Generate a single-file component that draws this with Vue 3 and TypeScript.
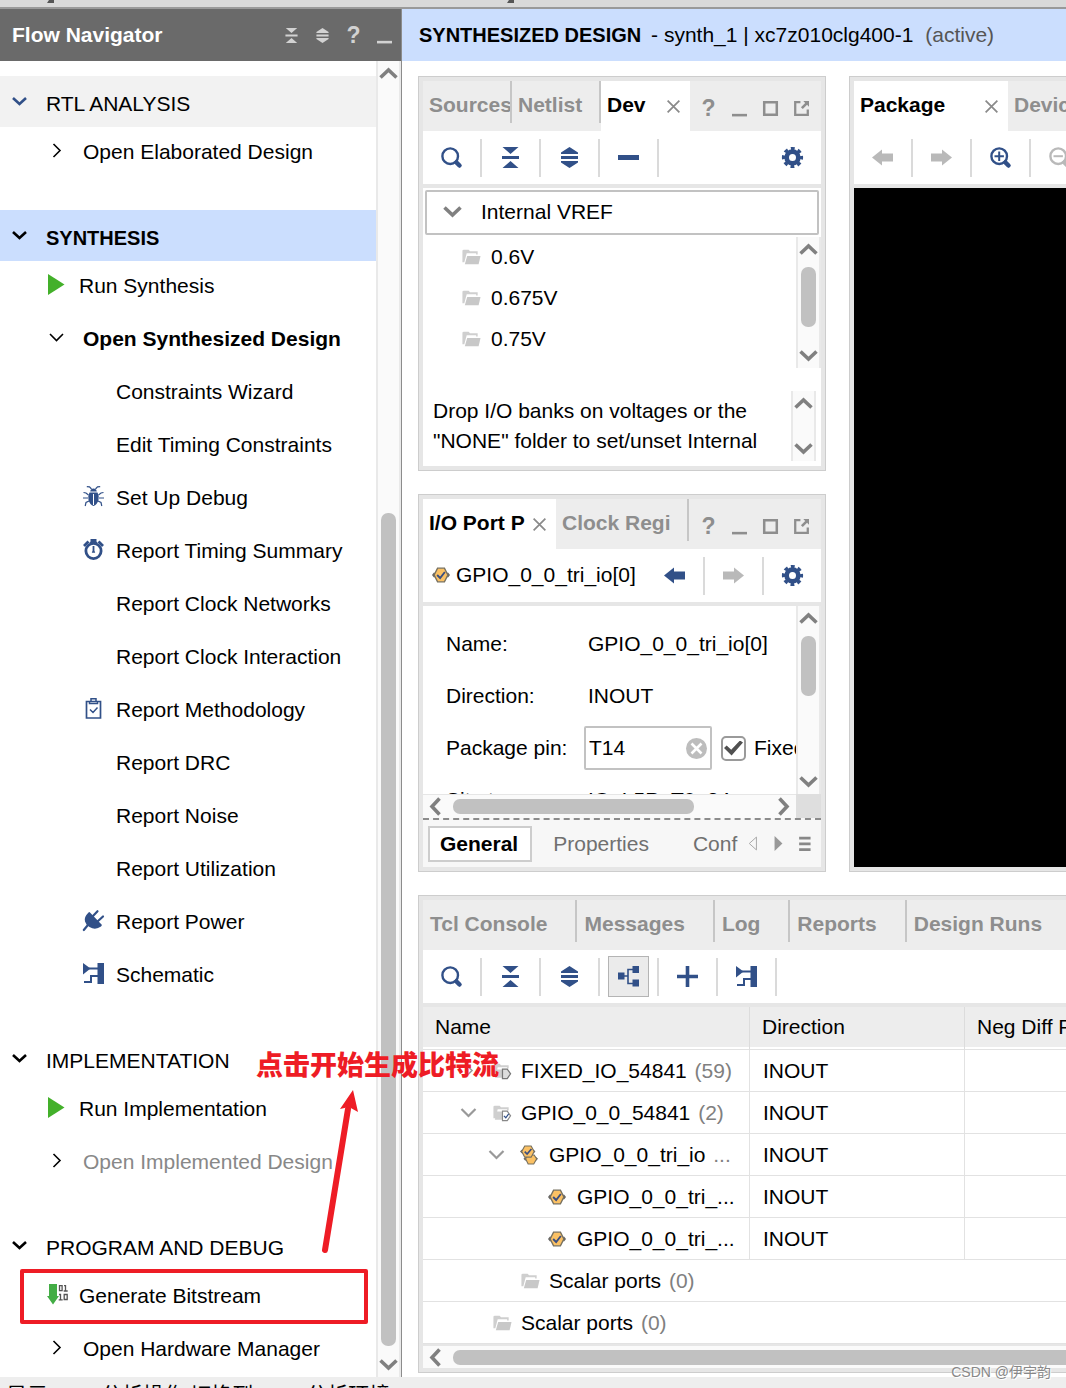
<script setup lang="ts">
import { h, ref } from 'vue'

const icons: Record<string, string> = {
  chevDown: '<path d="M4 7l6.500 6.500L17 7" fill="none" stroke="currentColor" stroke-width="1.600"/>',
  chevDownMid: '<path d="M3.500 7l7 7 7-7" fill="none" stroke="currentColor" stroke-width="2.200"/>',
  chevDownBold: '<path d="M4 7l6.500 6L17 7" fill="none" stroke="currentColor" stroke-width="2.600"/>',
  chevRight: '<path d="M7.500 4l6.500 6.500L7.500 17" fill="none" stroke="currentColor" stroke-width="1.600"/>',
  scrollUp: '<path d="M2.500 14.500l8-7.500 8 7.500" fill="none" stroke="currentColor" stroke-width="3.600"/>',
  scrollDown: '<path d="M2.500 6.500l8 7.500 8-7.500" fill="none" stroke="currentColor" stroke-width="3.600"/>',
  scrollLeft: '<path d="M14.500 2.500l-7.500 8 7.500 8" fill="none" stroke="currentColor" stroke-width="3.600"/>',
  scrollRight: '<path d="M6.500 2.500l7.500 8-7.500 8" fill="none" stroke="currentColor" stroke-width="3.600"/>',
  search: '<circle cx="9.200" cy="9.200" r="7.800" fill="none" stroke="currentColor" stroke-width="2.400"/><path d="M15.500 15.500l3 3" stroke="currentColor" stroke-width="4.500" stroke-linecap="round"/>',
  zoomIn: '<circle cx="9.200" cy="9.200" r="7.800" fill="none" stroke="currentColor" stroke-width="2.400"/><path d="M15.500 15.500l3 3" stroke="currentColor" stroke-width="4.500" stroke-linecap="round"/><path d="M4.500 9.200h9.400M9.200 4.500v9.400" stroke="currentColor" stroke-width="2"/>',
  zoomOut: '<circle cx="9.200" cy="9.200" r="7.800" fill="none" stroke="currentColor" stroke-width="2.400"/><path d="M15.500 15.500l3 3" stroke="currentColor" stroke-width="4.500" stroke-linecap="round"/><path d="M4.500 9.200h9.400" stroke="currentColor" stroke-width="2"/>',
  collapse: '<path d="M2.500 0h16l-8 7zM2 9h17v3H2zM2.500 21h16l-8-7z" fill="currentColor"/>',
  expand: '<path d="M10.500 0l8.500 5.500V7H2V5.500zM2 9h17v3H2zM10.500 21L19 15.500V14H2v1.500z" fill="currentColor"/>',
  minus: '<path d="M0 8h21v5H0z" fill="currentColor"/>',
  plus: '<path d="M0 8.700h8.700V0h3.600v8.700H21v3.600h-8.700V21H8.700v-8.700H0z" fill="currentColor"/>',
  gear: '<path d="M10.500 2.300a8.200 8.200 0 1 0 0 16.400 8.200 8.200 0 0 0 0-16.400zm0 4.700a3.500 3.500 0 1 1 0 7 3.500 3.500 0 0 1 0-7z" fill="currentColor" fill-rule="evenodd"/><circle cx="10.500" cy="10.500" r="9" fill="none" stroke="currentColor" stroke-width="3.200" stroke-dasharray="3.800 3.268" stroke-dashoffset="1.900"/>',
  arrowLeft: '<path d="M0 10.500L10 2.500v4h11v8H10v4z" fill="currentColor"/>',
  arrowRight: '<path d="M21 10.500L11 2.500v4H0v8h11v4z" fill="currentColor"/>',
  tree: '<path d="M0 6.500h6.500v7H0zM14.500 0H21v7h-6.500zM14.500 13.500H21v7h-6.500z" fill="currentColor"/><path d="M6 10h4M15 3.500h-5v14h5" fill="none" stroke="currentColor" stroke-width="1.600"/>',
  schematic: '<path d="M0 0l7.500 5.500L0 11.500zM14.500 0H21v21h-6.500z" fill="currentColor"/><path d="M6 5.500h9M15 13h-7v6H1" fill="none" stroke="currentColor" stroke-width="2"/>',
  bug: '<path d="M6.500 6.500h8q2 3.500 1 7.500-1.500 5-5 6-3.500-1-5-6-1-4 1-7.500zM7.200 5.500q.5-3 3.300-3t3.300 3z" fill="currentColor"/><path d="M10.500 8v11" stroke="#fff" stroke-width="1"/><path d="M8.500 3L6.500.8 3.800.6M12.500 3L14.500.8l2.700-.2M5.500 9L3 7 .5 6.500M15.500 9L18 7l2.500-.5M5 12H0M16 12h5M6 15l-3 1.500-.8 3.500M15 15l3 1.500.8 3.500" fill="none" stroke="currentColor" stroke-width="1.200"/>',
  timer: '<circle cx="10.500" cy="12" r="7.600" fill="none" stroke="currentColor" stroke-width="2.800"/><path d="M7.500 0h6v2.500l1 1.500h-8l1-1.500zM0 6L4.500 1.500 6.500 3.500 2 8zM21 6L16.500 1.500l-2 2L19 8zM9.600 7h1.800v4.500l.8 2.200h-3.400l.8-2.200z" fill="currentColor"/>',
  clipboard: '<path d="M3.500 3.500h14v16.500h-14z" fill="none" stroke="currentColor" stroke-width="1.700"/><path d="M8 3V.8h5V3M6.500 3v2.500h8V3M7 11.500l3 3 4.500-5" fill="none" stroke="currentColor" stroke-width="1.500"/>',
  plug: '<path d="M5.500 2.500q-5 5-3.500 9 1 3.500 4.500 5.500 6 3.500 11.500-.5l1-1.500L6.500 2z" fill="currentColor"/><path d="M9.500 6.500L14.500 1.200M14.500 11.500L20 6.500M4.500 15.500L.8 20" stroke="currentColor" stroke-width="2.200" stroke-linecap="round"/>',
  play: '<path d="M1 0l16.500 10.500L1 21z" fill="#43b02a"/>',
  bitstream: '<path d="M2 0h8v12h2L6 20.500 0 12h2z" fill="#43ad45"/><path d="M12.500 1.700h2.600v5h-2.600zM17 1.700h1.500v5.300M16.700 7h4M12 10.500h1.500v5M11.700 15.800h4M17.200 10.500h3v5h-3z" fill="none" stroke="#555" stroke-width="1.300"/>',
  folder: '<path d="M1.500 16V4q0-1.200 1.500-1.200h5L9.500 4.500h8V8h-1.600V6.500H6L3.500 16z" fill="#cfcfcf"/><path d="M6.500 9.500H20.500l-2 8.500H4z" fill="#c8c8c8"/>',
  folderPort: '<path d="M1.500 16V4q0-1.200 1.500-1.200h5L9.500 4.500h8V8h-1.600V6.500H6L3.500 16zM5 9h7v8.500H3z" fill="#cfcfcf"/><path d="M11 8.500h5l3.500 5-3.500 5h-5z" fill="#ddd" stroke="#777" stroke-width="1.300"/>',
  folderCheck: '<path d="M1.500 16V4q0-1.200 1.500-1.200h5L9.500 4.500h8V8h-1.600V6.500H6L3.500 16zM5 9h7v8.500H3z" fill="#cfcfcf"/><path d="M11 8.500h5l3.500 5-3.500 5h-5z" fill="#fff" stroke="#888" stroke-width="1.200"/><path d="M12.500 13.500l2 2 3-4" fill="none" stroke="#315088" stroke-width="1.300"/>',
  port: '<path d="M0 10.500l2-2.500h17l2 2.500-2 2.500H2z" fill="#666"/><path d="M6.500 2.500h8l4 8-4 8h-8l-4-8z" fill="#fbc164" stroke="#77705f" stroke-width="1.600"/><path d="M6 10.500l3.500 3.500 5.500-7" fill="none" stroke="#3b4f80" stroke-width="2.200"/>',
  ports: '<path d="M4 15l2-2h13l2 2-2 2H6z" fill="#666"/><path d="M9 10.500h7.500l3 4.500-3.500 6H9.500L6.500 15z" fill="#fbc164" stroke="#77705f" stroke-width="1.300"/><path d="M0 6.500l2-2h14l2 2-2 2H2z" fill="#666"/><path d="M5.500 0h7.500l3.500 6.500-3.500 6.500H5.500L2 6.500z" fill="#fbc164" stroke="#77705f" stroke-width="1.300"/><path d="M5.500 6.500l2.800 3 5-6" fill="none" stroke="#3b4f80" stroke-width="1.900"/>',
  winMin: '<path d="M0 18h21v3.600H0z" fill="currentColor"/>',
  winMax: '<path d="M1.700 1.700h17.600v17.600H1.700z" fill="none" stroke="currentColor" stroke-width="3.500"/>',
  winFloat: '<path d="M9 1.700H1.700v17.600h17.600V12" fill="none" stroke="currentColor" stroke-width="3.200"/><path d="M13 0h8v8l-2.700-2.700-6 6-2.600-2.600 6-6z" fill="currentColor"/>',
  close: '<path d="M1 1l19 19M20 1L1 20" stroke="currentColor" stroke-width="2.800"/>',
  clear: '<circle cx="10.500" cy="10.500" r="10.500" fill="#bdbdbd"/><path d="M5.500 5.500l10 10M15.500 5.500l-10 10" stroke="#fff" stroke-width="2.600"/>',
  triLeft: '<path d="M16 1.500v18L6 10.500z" fill="none" stroke="#aaa" stroke-width="1.400"/>',
  triRight: '<path d="M5 0v21l11-10.500z" fill="#999"/>',
  menu: '<path d="M3 1h16v4H3zM3 9h16v4H3zM3 17h16v4H3z" fill="#888"/>',
}

const Icon = (props: { name: string }) =>
  h('svg', { viewBox: '0 0 21 21', 'aria-hidden': 'true', innerHTML: icons[props.name] })
Icon.props = ['name']

interface NavItem { label: string; kind: 'tree' | 'run' | 'sub'; icon?: string; bold?: boolean; muted?: boolean; marked?: boolean }
interface NavSection { title: string; state?: string; items: NavItem[] }

const sections: NavSection[] = [
  { title: 'RTL ANALYSIS', state: 'hover', items: [{ label: 'Open Elaborated Design', kind: 'tree', icon: 'chevRight' }] },
  {
    title: 'SYNTHESIS', state: 'current', items: [
      { label: 'Run Synthesis', kind: 'run', icon: 'play' },
      { label: 'Open Synthesized Design', kind: 'tree', icon: 'chevDown', bold: true },
      { label: 'Constraints Wizard', kind: 'sub' },
      { label: 'Edit Timing Constraints', kind: 'sub' },
      { label: 'Set Up Debug', kind: 'sub', icon: 'bug' },
      { label: 'Report Timing Summary', kind: 'sub', icon: 'timer' },
      { label: 'Report Clock Networks', kind: 'sub' },
      { label: 'Report Clock Interaction', kind: 'sub' },
      { label: 'Report Methodology', kind: 'sub', icon: 'clipboard' },
      { label: 'Report DRC', kind: 'sub' },
      { label: 'Report Noise', kind: 'sub' },
      { label: 'Report Utilization', kind: 'sub' },
      { label: 'Report Power', kind: 'sub', icon: 'plug' },
      { label: 'Schematic', kind: 'sub', icon: 'schematic' },
    ],
  },
  {
    title: 'IMPLEMENTATION', items: [
      { label: 'Run Implementation', kind: 'run', icon: 'play' },
      { label: 'Open Implemented Design', kind: 'tree', icon: 'chevRight', muted: true },
    ],
  },
  {
    title: 'PROGRAM AND DEBUG', items: [
      { label: 'Generate Bitstream', kind: 'run', icon: 'bitstream', marked: true },
      { label: 'Open Hardware Manager', kind: 'tree', icon: 'chevRight' },
    ],
  },
]

const voltages = ['0.6V', '0.675V', '0.75V']
const bottomTabs = ['Tcl Console', 'Messages', 'Log', 'Reports', 'Design Runs']
const windowIcons = [
  { name: 'winMin', label: 'Minimize' },
  { name: 'winMax', label: 'Maximize' },
  { name: 'winFloat', label: 'Float' },
]
const bottomTools = [
  { name: 'search', label: 'Search' },
  { name: 'collapse', label: 'Collapse all' },
  { name: 'expand', label: 'Expand all' },
  { name: 'tree', label: 'Group by interface', on: true },
  { name: 'plus', label: 'Add' },
  { name: 'schematic', label: 'Schematic' },
]
const deviceTools = [
  { name: 'search', label: 'Search' },
  { name: 'collapse', label: 'Collapse all' },
  { name: 'expand', label: 'Expand all' },
  { name: 'minus', label: 'Remove' },
]

const rows = [
  { level: 0, chev: 'chevRight', icon: 'folderPort', name: 'FIXED_IO_54841', extra: '(59)', dir: 'INOUT' },
  { level: 0, chev: 'chevDownMid', icon: 'folderCheck', name: 'GPIO_0_0_54841', extra: '(2)', dir: 'INOUT' },
  { level: 1, chev: 'chevDownMid', icon: 'ports', name: 'GPIO_0_0_tri_io', extra: '...', dir: 'INOUT' },
  { level: 2, chev: '', icon: 'port', name: 'GPIO_0_0_tri_...', extra: '', dir: 'INOUT' },
  { level: 2, chev: '', icon: 'port', name: 'GPIO_0_0_tri_...', extra: '', dir: 'INOUT' },
  { level: 1, chev: '', icon: 'folder', name: 'Scalar ports', extra: '(0)', dir: '' },
  { level: 0, chev: '', icon: 'folder', name: 'Scalar ports', extra: '(0)', dir: '' },
]

const pin = ref('T14')
const fixed = ref(true)
</script>

<template>
  <div class="app">
    <div class="top-strip">
      <svg class="strip-mark" viewBox="0 0 8 3" aria-hidden="true"><path d="M2 0h5v3H0z" fill="#555" /></svg>
      <svg class="strip-mark" viewBox="0 0 8 3" aria-hidden="true"><path d="M2 0h5v3H0z" fill="#555" /></svg>
    </div>

    <div class="body">
      <aside class="nav">
        <header class="nav-head">
          <h2>Flow Navigator</h2>
          <button class="win" aria-label="Collapse all"><Icon name="collapse" /></button>
          <button class="win" aria-label="Expand all"><Icon name="expand" /></button>
          <button class="win help">?</button>
          <button class="win" aria-label="Minimize"><Icon name="winMin" /></button>
        </header>
        <div class="nav-body">
          <nav class="nav-list">
            <section v-for="s in sections" :key="s.title">
              <button class="nav-title" :class="s.state"><Icon name="chevDownBold" />{{ s.title }}</button>
              <button
                v-for="i in s.items"
                :key="i.label"
                class="nav-item"
                :class="[i.kind, { bold: i.bold, muted: i.muted, marked: i.marked }]"
              >
                <span class="slot"><Icon v-if="i.icon" :name="i.icon" /></span>{{ i.label }}
              </button>
            </section>
          </nav>
          <div class="vbar nav-bar">
            <Icon name="scrollUp" />
            <div class="track"><div class="before"></div><div class="thumb"></div></div>
            <Icon name="scrollDown" />
          </div>
        </div>
      </aside>

      <main class="work">
        <header class="work-head">
          <b>SYNTHESIZED DESIGN</b> - synth_1 | xc7z010clg400-1 <span class="active-note">(active)</span>
        </header>

        <div class="panels">
          <div class="upper">
            <div class="left">
              <section class="panel">
                <div class="tabs">
                  <button class="tab third">Sources</button>
                  <button class="tab third">Netlist</button>
                  <button class="tab third on">Dev<Icon name="close" /></button>
                  <div class="wins">
                    <button class="win help">?</button>
                    <button v-for="w in windowIcons" :key="w.name" class="win" :aria-label="w.label"><Icon :name="w.name" /></button>
                  </div>
                </div>
                <div class="tools">
                  <button v-for="t in deviceTools" :key="t.name" class="tool" :aria-label="t.label"><Icon :name="t.name" /></button>
                  <button class="tool last" aria-label="Settings"><Icon name="gear" /></button>
                </div>
                <div class="vref">
                  <button class="vref-head"><Icon name="scrollDown" />Internal VREF</button>
                  <div class="volt-area">
                    <ul>
                      <li v-for="v in voltages" :key="v"><Icon name="folder" />{{ v }}</li>
                    </ul>
                    <div class="vbar">
                      <Icon name="scrollUp" />
                      <div class="track"><div class="thumb short"></div></div>
                      <Icon name="scrollDown" />
                    </div>
                  </div>
                  <div class="note-area">
                    <p>Drop I/O banks on voltages or the "NONE" folder to set/unset Internal</p>
                    <div class="vbar">
                      <Icon name="scrollUp" />
                      <div class="track"></div>
                      <Icon name="scrollDown" />
                    </div>
                  </div>
                </div>
              </section>

              <section class="panel">
                <div class="tabs">
                  <button class="tab half on">I/O Port P<Icon name="close" /></button>
                  <button class="tab half">Clock Regi</button>
                  <div class="wins">
                    <button class="win help">?</button>
                    <button v-for="w in windowIcons" :key="w.name" class="win" :aria-label="w.label"><Icon :name="w.name" /></button>
                  </div>
                </div>
                <div class="tools">
                  <div class="port-name"><Icon name="port" />GPIO_0_0_tri_io[0]</div>
                  <button class="tool" aria-label="Previous"><Icon name="arrowLeft" /></button>
                  <button class="tool off" aria-label="Next"><Icon name="arrowRight" /></button>
                  <button class="tool last" aria-label="Settings"><Icon name="gear" /></button>
                </div>
                <div class="props">
                  <div class="form">
                    <div class="field"><span class="label">Name:</span><span class="value">GPIO_0_0_tri_io[0]</span></div>
                    <div class="field"><span class="label">Direction:</span><span class="value">INOUT</span></div>
                    <div class="field">
                      <label class="label" for="pin">Package pin:</label>
                      <div class="pin-box">
                        <input id="pin" v-model="pin" type="text" />
                        <button aria-label="Clear" @click="pin = ''"><Icon name="clear" /></button>
                      </div>
                      <label class="check"><input v-model="fixed" type="checkbox" />Fixed</label>
                    </div>
                    <div class="field"><span class="label">Site type:</span><span class="value">IO_L5P_T0_34</span></div>
                  </div>
                  <div class="vbar">
                    <Icon name="scrollUp" />
                    <div class="track"><div class="thumb short"></div></div>
                    <Icon name="scrollDown" />
                  </div>
                </div>
                <div class="hrow">
                  <div class="hbar">
                    <Icon name="scrollLeft" />
                    <div class="track"><div class="thumb part"></div></div>
                    <Icon name="scrollRight" />
                  </div>
                  <div class="corner"></div>
                </div>
                <div class="foot-tabs">
                  <button class="foot on">General</button>
                  <button class="foot">Properties</button>
                  <button class="foot cut">Conf</button>
                  <button class="mini" aria-label="Scroll tabs left"><Icon name="triLeft" /></button>
                  <button class="mini" aria-label="Scroll tabs right"><Icon name="triRight" /></button>
                  <button class="mini" aria-label="Tab list"><Icon name="menu" /></button>
                </div>
              </section>
            </div>

            <section class="panel open package">
              <div class="tabs">
                <button class="tab wide on">Package<Icon name="close" /></button>
                <button class="tab">Device</button>
              </div>
              <div class="tools">
                <button class="tool off" aria-label="Back"><Icon name="arrowLeft" /></button>
                <button class="tool off" aria-label="Forward"><Icon name="arrowRight" /></button>
                <button class="tool" aria-label="Zoom in"><Icon name="zoomIn" /></button>
                <button class="tool off" aria-label="Zoom out"><Icon name="zoomOut" /></button>
              </div>
              <div class="canvas"></div>
            </section>
          </div>

          <section class="panel open">
            <div class="tabs log-tabs">
              <button v-for="t in bottomTabs" :key="t" class="tab">{{ t }}</button>
            </div>
            <div class="tools">
              <button v-for="t in bottomTools" :key="t.name" class="tool" :class="{ toggled: t.on }" :aria-label="t.label">
                <span><Icon :name="t.name" /></span>
              </button>
            </div>
            <table>
              <colgroup><col class="c-name" /><col class="c-dir" /><col /></colgroup>
              <thead>
                <tr><th>Name</th><th>Direction</th><th>Neg Diff Pair</th></tr>
              </thead>
              <tbody>
                <tr v-for="(r, n) in rows" :key="n">
                  <td :colspan="r.dir ? 1 : 3">
                    <div class="cell" :class="'level' + r.level">
                      <span class="chev"><Icon v-if="r.chev" :name="r.chev" /></span>
                      <span class="type"><Icon :name="r.icon" :class="{ small: r.icon.startsWith('port') }" /></span>
                      <span class="name">{{ r.name }} <span class="extra">{{ r.extra }}</span></span>
                    </div>
                  </td>
                  <template v-if="r.dir"><td class="dir">{{ r.dir }}</td><td></td></template>
                </tr>
              </tbody>
            </table>
            <div class="hbar wide-bar">
              <Icon name="scrollLeft" />
              <div class="track"><div class="thumb"></div></div>
            </div>
          </section>
        </div>
      </main>
    </div>

    <footer class="status">显示 <b>RTL</b> 分析操作 切换到 <b>RTL</b> 分析环境</footer>

    <svg class="pointer" viewBox="0 0 44 166" aria-hidden="true">
      <path d="M9 161L32 20" stroke="#ee1c25" stroke-width="6" stroke-linecap="round" />
      <path d="M37 1L42 23 33 18 24 20z" fill="#ee1c25" />
    </svg>
    <div class="caption">点击开始生成比特流</div>
    <div class="watermark">CSDN @伊宇韵</div>
  </div>
</template>

<style>
body {
  margin: 0;
}
</style>

<style scoped>
* {
  box-sizing: border-box;
}
.app {
  position: relative;
  display: flex;
  flex-direction: column;
  height: 100vh;
  overflow: hidden;
  background: #fff;
  color: #000;
  font: 21px/30px "Liberation Sans", Arial, sans-serif;
}
button {
  font: inherit;
  color: inherit;
  background: none;
  border: 0;
  padding: 0;
  margin: 0;
  text-align: left;
  white-space: nowrap;
}
svg {
  display: block;
  flex: none;
  width: 21px;
  height: 21px;
  overflow: visible;
}
.top-strip {
  flex: none;
  display: flex;
  gap: 452px;
  height: 9px;
  padding-left: 47px;
  background: #d9d9d9;
  border-bottom: 2px solid #999;
}
.strip-mark {
  width: 8px;
  height: 3px;
}
.body {
  flex: 1 0 auto;
  display: flex;
}

/* flow navigator */
.nav {
  flex: none;
  display: flex;
  flex-direction: column;
  width: 402px;
  border-right: 1px solid #8c8c8c;
}
.nav-head {
  display: flex;
  align-items: center;
  height: 52px;
  padding: 0 1px 0 12px;
  background: #6a6a6a;
  color: #d2d2d2;
}
.nav-head h2 {
  flex: 1;
  margin: 0;
  font-size: 21px;
  color: #fff;
}
.win {
  display: flex;
  align-items: center;
  justify-content: center;
  width: 31px;
  height: 30px;
}
.win svg {
  width: 15px;
  height: 15px;
}
.win.help {
  font-weight: bold;
  font-size: 23px;
}
.nav-body {
  flex: 1;
  display: flex;
}
.nav-list {
  flex: 1;
  padding-top: 15px;
}
.nav-list section + section {
  margin-top: 30px;
}
.nav-title {
  display: flex;
  align-items: center;
  gap: 16px;
  width: 100%;
  height: 51px;
  padding: 4px 0 0 9px;
}
.nav-title svg {
  margin-bottom: 4px;
}
.nav-title.hover {
  background: #f2f2f2;
}
.nav-title.hover svg {
  color: #315088;
}
.nav-title.current {
  background: #cbdefe;
  font-size: 20px;
  font-weight: bold;
}
.nav-item {
  position: relative;
  display: flex;
  align-items: center;
  width: 100%;
  height: 53px;
  padding-bottom: 3px;
}
.slot {
  flex: none;
  width: 21px;
  height: 21px;
  margin-bottom: 4px;
}
.nav-item.tree {
  gap: 16px;
  padding-left: 46px;
}
.nav-item.run {
  gap: 11px;
  padding-left: 47px;
}
.nav-item.sub {
  gap: 12px;
  padding-left: 83px;
}
.nav-item.sub .slot {
  color: #315088;
}
.nav-item.bold {
  font-weight: bold;
}
.nav-item.muted {
  color: #888;
}
.nav-item.muted .slot {
  color: #000;
}
.nav-item.marked::after {
  content: "";
  position: absolute;
  inset: -2px 8px 0 20px;
  border: 4px solid #ee1c25;
  border-radius: 2px;
}

/* scroll bars */
.vbar {
  flex: none;
  display: flex;
  flex-direction: column;
  align-items: center;
  width: 25px;
  padding: 2px 0;
  background: #fafafa;
  border-left: 2px solid #e9e9e9;
  border-right: 2px solid #e9e9e9;
  color: #808080;
}
.vbar .track {
  flex: 1;
  display: flex;
  flex-direction: column;
  width: 15px;
  padding: 7px 0;
}
.thumb {
  flex: 1;
  border-radius: 7px;
  background: #c1c1c1;
}
.thumb.short {
  flex: none;
  height: 60px;
}
.nav-bar .track {
  padding: 0 0 8px;
}
.nav-bar .before {
  flex: 0 0 429px;
}
.hbar {
  flex: 1;
  display: flex;
  align-items: center;
  height: 24px;
  padding: 0 2px;
  background: #fafafa;
  border-top: 1px solid #e6e6e6;
  color: #808080;
}
.hbar .track {
  flex: 1;
  display: flex;
  height: 15px;
  padding: 0 7px;
}
.thumb.part {
  flex: none;
  width: 77%;
}

/* workspace */
.work {
  flex: 1;
  min-width: 0;
  display: flex;
  flex-direction: column;
}
.work-head {
  height: 52px;
  padding-left: 17px;
  line-height: 52px;
  background: #cbdefe;
  white-space: nowrap;
  overflow: hidden;
}
.work-head b {
  margin-right: 4px;
  font-size: 20px;
}
.active-note {
  margin-left: 6px;
  color: #555;
}
.panels {
  display: flex;
  flex-direction: column;
  gap: 23px;
  padding: 15px 0 4px 16px;
}
.upper {
  display: flex;
  gap: 23px;
}
.left {
  flex: none;
  display: flex;
  flex-direction: column;
  gap: 23px;
  width: 408px;
}
.panel {
  display: flex;
  flex-direction: column;
  padding: 4px;
  border: 1px solid #cdcdcd;
  background: #e6e6e6;
  min-width: 0;
}
.panel.open {
  padding-right: 0;
  border-right: 0;
  overflow: hidden;
}
.package {
  flex: 1;
}
.tabs {
  display: flex;
  height: 50px;
  background: #ededed;
}
.tab {
  position: relative;
  flex: none;
  display: flex;
  align-items: center;
  justify-content: space-between;
  padding: 0 10px 2px 6px;
  color: #8e8e8e;
  font-weight: bold;
}
.tab::after {
  content: "";
  position: absolute;
  top: 0;
  right: 0;
  width: 2px;
  height: 42px;
  background: #c6c6c6;
}
.tab.on::after,
.log-tabs .tab:last-child::after {
  display: none;
}
.tab.on {
  background: #fff;
  color: #000;
}
.tab svg {
  width: 13px;
  height: 13px;
  margin-top: 3px;
  color: #8a8a8a;
}
.tab.third {
  width: 89px;
}
.tab.half {
  width: 133px;
}
.tab.wide {
  width: 154px;
}
.log-tabs .tab {
  padding: 0 30px 2px 7px;
}
.wins {
  display: flex;
  margin-left: auto;
  padding: 12px 4px 0 0;
  color: #8e8e8e;
}
.tools {
  flex: none;
  display: flex;
  align-items: center;
  height: 57px;
  background: #fff;
  border-bottom: 4px solid #e6e6e6;
  color: #315088;
}
.tool {
  flex: none;
  display: flex;
  align-items: center;
  justify-content: center;
  width: 59px;
  height: 38px;
  border-right: 2px solid #dadada;
}
.tool.last {
  width: 57px;
  margin-left: auto;
  border-right: 0;
}
.tool.off {
  color: #b9b9b9;
}
.tool.toggled span {
  flex: none;
  padding: 9px;
  border: 1px solid #b4b4b4;
  background: #ebebeb;
}

/* internal vref */
.vref {
  padding: 2px 2px 5px;
  background: #fff;
}
.vref-head {
  display: flex;
  align-items: center;
  gap: 18px;
  width: 100%;
  height: 45px;
  padding: 0 0 2px 15px;
  border: 2px solid #c2c2c2;
  border-radius: 2px;
}
.vref-head svg {
  color: #808080;
}
.volt-area {
  display: flex;
  margin: 2px -2px 0 0;
  height: 131px;
}
.volt-area ul {
  flex: 1;
  margin: 0;
  padding: 0 0 0 36px;
  list-style: none;
}
.volt-area li {
  display: flex;
  align-items: center;
  gap: 10px;
  height: 41px;
  padding-bottom: 2px;
}
.volt-area li svg {
  width: 20px;
  height: 20px;
}
.note-area {
  display: flex;
  margin-top: 23px;
  height: 70px;
  padding: 0 3px 0 8px;
}
.note-area p {
  flex: 1;
  margin: 0;
  padding-top: 5px;
}

/* port properties */
.port-name {
  flex: 1;
  display: flex;
  align-items: center;
  gap: 6px;
  padding: 0 0 2px 9px;
  color: #000;
}
.port-name svg {
  width: 18px;
  height: 18px;
}
.props {
  display: flex;
  height: 188px;
  background: #fff;
}
.form {
  flex: 1;
  min-width: 0;
  padding: 12px 0 0 23px;
  overflow: hidden;
}
.field {
  display: flex;
  align-items: center;
  height: 52px;
  white-space: nowrap;
}
.label {
  flex: none;
  width: 138px;
}
.value {
  padding-left: 4px;
}
.pin-box {
  flex: none;
  display: flex;
  align-items: center;
  width: 128px;
  height: 44px;
  padding: 0 3px;
  border: 2px solid #c2c2c2;
  border-radius: 2px;
}
.pin-box input {
  flex: 1;
  min-width: 0;
  padding: 0;
  border: 0;
  outline: 0;
  font: inherit;
}
.check {
  flex: none;
  display: flex;
  align-items: center;
  gap: 8px;
  margin-left: 9px;
}
.check input {
  appearance: none;
  display: grid;
  place-items: center;
  width: 25px;
  height: 25px;
  margin: 0;
  border: 2px solid #9a9a9a;
  border-radius: 5px;
}
.check input:checked::after {
  content: "";
  width: 19px;
  height: 15px;
  background: #505050;
  clip-path: polygon(0 50%, 14% 34%, 38% 62%, 84% 0, 100% 14%, 40% 100%);
}
.hrow {
  display: flex;
}
.corner {
  width: 25px;
  background: #dedede;
}
.foot-tabs {
  display: flex;
  align-items: center;
  height: 49px;
  padding: 0 4px 0 5px;
  background: #f7f7f7;
  border-top: 2px dashed #8c8c8c;
  color: #707070;
}
.foot {
  flex: none;
  height: 36px;
  padding: 0 10px;
  border: 2px solid transparent;
}
.foot.on {
  padding-right: 12px;
  border-color: #cdcdcd;
  background: #fff;
  color: #000;
  font-weight: bold;
}
.foot + .foot {
  margin-left: 9px;
}
.foot.cut {
  margin-left: 20px;
  padding-right: 0;
}
.mini {
  display: flex;
  justify-content: center;
  flex: 1;
}
.mini svg {
  width: 15px;
  height: 15px;
}
.canvas {
  flex: 1;
  background: #000;
}

/* port table */
table {
  width: 100%;
  table-layout: fixed;
  border-collapse: separate;
  border-spacing: 0;
  background: #fff;
}
.c-name {
  width: 327px;
}
.c-dir {
  width: 215px;
}
th {
  height: 43px;
  padding: 0 0 2px 12px;
  border-right: 1px solid #dcdcdc;
  border-bottom: 1px solid #e2e2e2;
  background: linear-gradient(#ededed 40px, #fff 40px);
  font-weight: normal;
  text-align: left;
  white-space: nowrap;
  overflow: hidden;
}
td {
  height: 42px;
  padding: 0;
  border-right: 1px solid #e2e2e2;
  border-bottom: 1px solid #e2e2e2;
  white-space: nowrap;
}
.dir {
  padding-left: 13px;
}
th:last-child,
td:last-child {
  border-right: 0;
}
.cell {
  display: flex;
  align-items: center;
}
.type {
  width: 29px;
}
.type svg {
  width: 20px;
  height: 20px;
}
.type svg.small {
  width: 18px;
  height: 18px;
}
.chev {
  width: 32px;
  color: #999;
}
.chev svg {
  margin-left: -2px;
}
.level0 {
  padding-left: 37px;
}
.level1 {
  padding-left: 65px;
}
.level2 {
  padding-left: 93px;
}
.extra {
  margin-left: 2px;
  color: #808080;
}
.wide-bar {
  flex: none;
  border-top-width: 2px;
  padding-right: 0;
}
.wide-bar .track {
  padding-right: 0;
}
.wide-bar .thumb {
  border-radius: 7px 0 0 7px;
}

.status {
  flex: none;
  height: 40px;
  padding: 6px 0 0 6px;
  background: #eee;
  font: 21px/24px "Liberation Serif", "Noto Sans CJK SC", serif;
  white-space: nowrap;
}

/* annotations over the window */
.pointer {
  position: absolute;
  left: 316px;
  top: 1089px;
  width: 44px;
  height: 166px;
}
.caption {
  position: absolute;
  left: 256px;
  top: 1044px;
  color: #ee1c25;
  font: 900 27px/40px "Noto Sans CJK SC", sans-serif;
  white-space: nowrap;
}
.watermark {
  position: absolute;
  right: 15px;
  top: 1361px;
  color: #888;
  font: 14px/22px "Liberation Sans", "Noto Sans CJK SC", sans-serif;
  text-shadow: 1px 1px 0 #fff;
}
</style>
